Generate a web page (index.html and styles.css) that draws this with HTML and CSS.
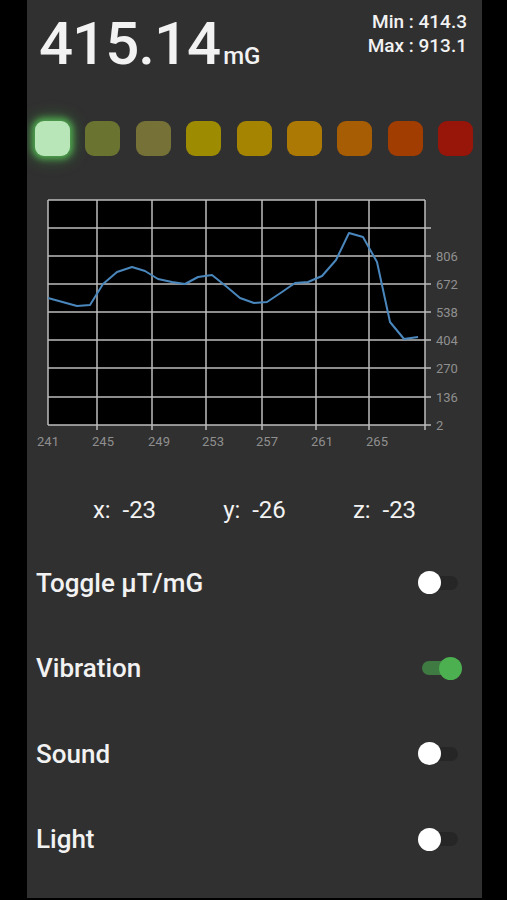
FILE: index.html
```html
<!DOCTYPE html>
<html lang="en">
<head>
  <meta charset="UTF-8">
  <meta name="viewport" content="width=device-width, initial-scale=1.0">
  <title>Magnetometer</title>
  <link rel="stylesheet" href="styles.css">
</head>
<body>
  <div class="screen">
    <div class="header">
      <div class="reading">415.14<span class="unit">mG</span></div>
      <div class="minmax">
        <div>Min : 414.3</div>
        <div>Max : 913.1</div>
      </div>
    </div>

    <div class="levels">
      <div class="level active"></div>
      <div class="level" style="background:#6b7331"></div>
      <div class="level" style="background:#767237"></div>
      <div class="level" style="background:#9d8b02"></div>
      <div class="level" style="background:#a58402"></div>
      <div class="level" style="background:#ac7a04"></div>
      <div class="level" style="background:#a65d03"></div>
      <div class="level" style="background:#a23d02"></div>
      <div class="level" style="background:#981509"></div>
    </div>

    <svg class="chart" width="455" height="265" viewBox="27 190 455 265">
      <rect x="48" y="201" width="377" height="225" fill="#000"/>
      <g stroke="#bdbdbd" stroke-width="1.5">
        <line x1="48" y1="201" x2="425" y2="201"/>
        <line x1="48" y1="229" x2="431" y2="229"/>
        <line x1="48" y1="257" x2="431" y2="257"/>
        <line x1="48" y1="285" x2="431" y2="285"/>
        <line x1="48" y1="313" x2="431" y2="313"/>
        <line x1="48" y1="341" x2="431" y2="341"/>
        <line x1="48" y1="369" x2="431" y2="369"/>
        <line x1="48" y1="398" x2="431" y2="398"/>
        <line x1="48" y1="426" x2="431" y2="426"/>
        <line x1="48" y1="201" x2="48" y2="426"/>
        <line x1="97" y1="201" x2="97" y2="431"/>
        <line x1="152" y1="201" x2="152" y2="431"/>
        <line x1="206" y1="201" x2="206" y2="431"/>
        <line x1="262" y1="201" x2="262" y2="431"/>
        <line x1="316" y1="201" x2="316" y2="431"/>
        <line x1="369" y1="201" x2="369" y2="431"/>
        <line x1="425" y1="201" x2="425" y2="431"/>
      </g>
      <polyline fill="none" stroke="#4a87bd" stroke-width="2" stroke-linejoin="round"
        points="48,299 77,307 90,306 103,285 117,273 132,268 145,272 158,280 172,283 185,285 198,278 212,276 227,288 240,299 254,304 267,303 282,293 295,284 308,283 322,277 336,261 349,234 363,238 377,263 390,323 404,340 418,338"/>
      <g class="axis-x" text-anchor="middle">
        <text x="48" y="447">241</text>
        <text x="103" y="447">245</text>
        <text x="159" y="447">249</text>
        <text x="213" y="447">253</text>
        <text x="267" y="447">257</text>
        <text x="322" y="447">261</text>
        <text x="377" y="447">265</text>
      </g>
      <g class="axis-y">
        <text x="436" y="262">806</text>
        <text x="436" y="290">672</text>
        <text x="436" y="318">538</text>
        <text x="436" y="346">404</text>
        <text x="436" y="374">270</text>
        <text x="436" y="403">136</text>
        <text x="436" y="431">2</text>
      </g>
    </svg>

    <div class="axes">
      <div>x:&nbsp; -23</div>
      <div>y:&nbsp; -26</div>
      <div>z:&nbsp; -23</div>
    </div>

    <div class="settings">
      <div class="row">
        <span>Toggle μT/mG</span>
        <div class="switch"><div class="thumb"></div></div>
      </div>
      <div class="row">
        <span>Vibration</span>
        <div class="switch on"><div class="thumb"></div></div>
      </div>
      <div class="row">
        <span>Sound</span>
        <div class="switch"><div class="thumb"></div></div>
      </div>
      <div class="row">
        <span>Light</span>
        <div class="switch"><div class="thumb"></div></div>
      </div>
    </div>
  </div>
</body>
</html>
```

FILE: styles.css
```css
body {
  margin: 0;
  background-color: #000;
  font-family: Roboto, "Liberation Sans", sans-serif;
  color: #f2f2f2;
}
.screen {
  width: 455px;
  height: 898px;
  margin-left: 27px;
  background-color: #303030;
  overflow: hidden;
}
.header {
  display: flex;
  justify-content: space-between;
  align-items: flex-start;
  padding: 9px 15px 0 12px;
  height: 101px;
}
.reading {
  font-size: 60px;
  font-weight: 500;
  line-height: 70px;
  letter-spacing: -1px;
}
.unit {
  font-size: 24px;
  letter-spacing: 0;
  margin-left: 3px;
}
.minmax {
  font-size: 19px;
  font-weight: 500;
  line-height: 24px;
  text-align: right;
  padding-top: 1px;
}
.levels {
  display: flex;
  justify-content: space-between;
  padding: 0 9px 0 8px;
  margin-top: 11px;
}
.level {
  width: 35px;
  height: 35px;
  border-radius: 9px;
}
.level.active {
  background-color: #b9e6b9;
  box-shadow: 0 0 6px 3px rgba(90, 200, 90, 0.75), 0 0 14px 6px rgba(70, 160, 70, 0.35);
}
.chart {
  display: block;
  margin-top: 33px;
}
.axis-x text, .axis-y text {
  font-size: 13px;
  fill: #8f8f8f;
}
.axes {
  display: grid;
  grid-template-columns: 130px 130px 130px;
  justify-content: center;
  justify-items: center;
  font-size: 24px;
  margin-top: 41px;
  line-height: 30px;
}
.settings {
  margin-top: 15px;
}
.row {
  display: flex;
  justify-content: space-between;
  align-items: center;
  height: 85.5px;
  padding: 0 24px 0 9px;
  font-size: 26px;
  font-weight: 500;
}
.switch {
  position: relative;
  width: 36px;
  height: 14px;
  border-radius: 7px;
  background-color: #262626;
}
.thumb {
  position: absolute;
  left: -4px;
  top: -4.5px;
  width: 23px;
  height: 23px;
  border-radius: 50%;
  background-color: #fff;
}
.switch.on {
  background-color: #3f7a42;
}
.switch.on .thumb {
  left: auto;
  right: -4px;
  background-color: #4caf50;
}
```
